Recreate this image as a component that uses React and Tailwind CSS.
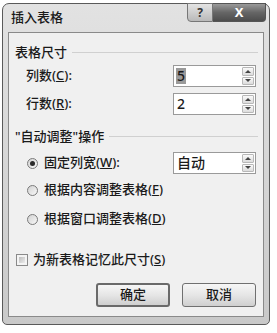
import React from "react";

const font = { fontFamily: '"Noto Sans", "Noto Sans CJK SC", sans-serif' };

const SectionTitle = ({ children }) => (
    <div className="flex items-center h-[20px] pl-[6px] pr-[5px] gap-[5px]">
        <span className="text-[13px] text-[#1a1a1a] leading-none font-medium">{children}</span>
        <div className="flex-1 h-px bg-[#d0d0d0]" />
    </div>
);

const Spinner = () => (
    <div className="flex flex-col w-[13px] h-full py-[1px] pr-[1px] gap-[1px]">
        <div className="flex-1 flex items-center justify-center bg-gradient-to-b from-[#fafafa] to-[#dcdcdc] border border-[#b8b8b8] rounded-[1px]">
            <div className="w-0 h-0 border-l-[3px] border-r-[3px] border-b-[3px] border-l-transparent border-r-transparent border-b-[#444]" />
        </div>
        <div className="flex-1 flex items-center justify-center bg-gradient-to-b from-[#fafafa] to-[#dcdcdc] border border-[#b8b8b8] rounded-[1px]">
            <div className="w-0 h-0 border-l-[3px] border-r-[3px] border-t-[3px] border-l-transparent border-r-transparent border-t-[#444]" />
        </div>
    </div>
);

const SpinBox = ({ value, selected }) => (
    <div className="flex w-[83px] h-[22px] bg-white border border-[#9a9a9a]">
        <div className="flex-1 flex items-center pl-[2px]">
            <span className={"text-[14px] leading-none text-[#1a1a1a] font-medium px-[1px] py-[1px] " + (selected ? "bg-[#9a9a9a]" : "")}>{value}</span>
        </div>
        <Spinner />
    </div>
);

const Radio = ({ checked }) => (
    <div className="w-[11px] h-[11px] rounded-full border border-[#7a7a7a] bg-gradient-to-br from-[#d2d2d2] to-[#f8f8f8] flex items-center justify-center">
        {checked && <div className="w-[5px] h-[5px] rounded-full bg-[#2a2a2a]" />}
    </div>
);

const Button = ({ children, isDefault }) => (
    <div className={"w-[74px] h-[24px] rounded-[3px] flex items-center justify-center bg-gradient-to-b from-[#f6f6f6] via-[#e6e6e6] to-[#cfcfcf] text-[13px] font-medium text-[#1a1a1a] " + (isDefault ? "border-2 border-[#6a6a6a]" : "border border-[#707070]")}>
        {children}
    </div>
);

const Label = ({ children }) => (
    <span className="text-[13px] text-[#1a1a1a] font-medium">{children}</span>
);

export default function App() {
    return (
        <div className="w-[277px] h-[333px] bg-white pt-[3px] pl-[2px]" style={font}>
            <div className="w-[268px] h-[322px] flex flex-col border border-[#5a5a5a] rounded-t-[7px] rounded-b-[5px] bg-gradient-to-b from-[#e2e2e2] via-[#d6d6d6] to-[#c9c9c9]">
                {/* title bar */}
                <div className="h-[28px] flex justify-between">
                    <span className="pl-[8px] pt-[5px] text-[13px] text-[#1a1a1a] font-medium leading-[16px]">插入表格</span>
                    <div className="flex mr-[3px] h-[19px] -mt-px">
                        <div className="w-[26px] flex items-center justify-center border border-[#777] rounded-bl-[4px] bg-gradient-to-b from-[#e4e4e4] to-[#b9b9b9] text-[12px] font-bold text-[#333]">?</div>
                        <div className="w-[53px] flex items-center justify-center border border-l-0 border-[#555] rounded-br-[4px] bg-gradient-to-b from-[#9a9a9a] via-[#666] to-[#4d4d4d] text-[13px] font-bold text-white">X</div>
                    </div>
                </div>
                {/* client area */}
                <div className="mx-[5px] h-[285px] flex flex-col bg-[#f0f0f0] border border-[#8a8a8a]">
                    <div className="mt-[9px]">
                        <SectionTitle>表格尺寸</SectionTitle>
                    </div>
                    <div className="mt-[3px] flex items-center justify-between pl-[17px] pr-[7px]">
                        <Label>列数(<u>C</u>):</Label>
                        <SpinBox value="5" selected />
                    </div>
                    <div className="mt-[6px] flex items-center justify-between pl-[17px] pr-[7px]">
                        <Label>行数(<u>R</u>):</Label>
                        <SpinBox value="2" />
                    </div>
                    <div className="mt-[11px]">
                        <SectionTitle>"自动调整"操作</SectionTitle>
                    </div>
                    <div className="mt-[6px] flex items-center justify-between pl-[18px] pr-[7px]">
                        <div className="flex items-center gap-[6px]">
                            <Radio checked />
                            <Label>固定列宽(<u>W</u>):</Label>
                        </div>
                        <SpinBox value="自动" />
                    </div>
                    <div className="mt-[6px] h-[20px] flex items-center gap-[6px] pl-[18px]">
                        <Radio />
                        <Label>根据内容调整表格(<u>F</u>)</Label>
                    </div>
                    <div className="mt-[9px] h-[20px] flex items-center gap-[6px] pl-[18px]">
                        <Radio />
                        <Label>根据窗口调整表格(<u>D</u>)</Label>
                    </div>
                    <div className="mt-[21px] h-[20px] flex items-center gap-[5px] pl-[7px]">
                        <div className="w-[12px] h-[12px] p-[2px] border border-[#8a8a8a] bg-[#f4f4f4]">
                            <div className="w-full h-full bg-gradient-to-br from-[#bdbdbd] to-[#ececec]" />
                        </div>
                        <Label>为新表格记忆此尺寸(<u>S</u>)</Label>
                    </div>
                    <div className="mt-[13px] flex justify-end gap-[12px] pr-[7px]">
                        <Button isDefault>确定</Button>
                        <Button>取消</Button>
                    </div>
                </div>
            </div>
        </div>
    );
}
